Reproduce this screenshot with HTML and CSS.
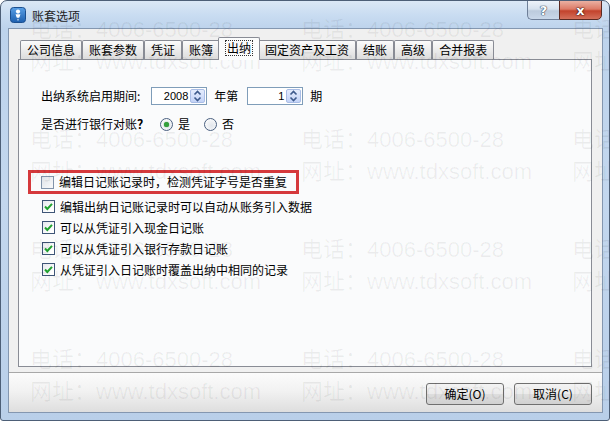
FILE: index.html
```html
<!DOCTYPE html>
<html lang="zh-CN">
<head>
<meta charset="utf-8">
<title>账套选项</title>
<link rel="stylesheet" href="styles.css">
</head>
<body>
<div class="window">
  <div class="titlebar">
    <div class="title-left">
      <svg class="app-icon" width="16" height="16" viewBox="0 0 16 16">
        <defs>
          <linearGradient id="ig" x1="0" y1="0" x2="0" y2="1">
            <stop offset="0" stop-color="#5aa0e6"/>
            <stop offset="1" stop-color="#1d5fae"/>
          </linearGradient>
        </defs>
        <rect x="0.5" y="0.5" width="15" height="15" rx="3" fill="url(#ig)" stroke="#1b4f8f"/>
        <circle cx="8" cy="4.6" r="2.1" fill="#fff"/>
        <path d="M5.6 7.2h4.8l-1 3.2h-0.9v3.2h-1v-3.2h-0.9z" fill="#fff"/>
        <path d="M7.1 11.5h1.8" stroke="#1d5fae" stroke-width="0.8"/>
      </svg>
      <span class="title-text">账套选项</span>
    </div>
    <div class="caption-btns">
      <div class="cap-help">?</div>
      <div class="cap-close">x</div>
    </div>
  </div>

  <div class="client">
    <div class="tabstrip">
      <div class="tab">公司信息</div>
      <div class="tab">账套参数</div>
      <div class="tab">凭证</div>
      <div class="tab">账簿</div>
      <div class="tab active"><span class="focus">出纳</span></div>
      <div class="tab">固定资产及工资</div>
      <div class="tab">结账</div>
      <div class="tab">高级</div>
      <div class="tab">合并报表</div>
    </div>

    <div class="panel">
      <div class="row period-row">
        <span class="label">出纳系统启用期间:</span>
        <div class="spin">
          <span class="spin-val">2008</span>
          <div class="spin-btn">
            <svg width="9" height="12" viewBox="0 0 9 12"><path d="M1.5 4.5L4.5 1.5L7.5 4.5M1.5 7.5L4.5 10.5L7.5 7.5" fill="none" stroke="#3d5a8c" stroke-width="1.6"/></svg>
          </div>
        </div>
        <span class="label after-spin">年第</span>
        <div class="spin spin2">
          <span class="spin-val">1</span>
          <div class="spin-btn">
            <svg width="9" height="12" viewBox="0 0 9 12"><path d="M1.5 4.5L4.5 1.5L7.5 4.5M1.5 7.5L4.5 10.5L7.5 7.5" fill="none" stroke="#3d5a8c" stroke-width="1.6"/></svg>
          </div>
        </div>
        <span class="label after-spin">期</span>
      </div>

      <div class="row radio-row">
        <span class="label">是否进行银行对账<b class="qm">？</b></span>
        <span class="radio checked"></span><span class="label rlabel">是</span>
        <span class="radio second"></span><span class="label rlabel">否</span>
      </div>

      <div class="highlight">
        <span class="check"></span><span class="label">编辑日记账记录时，检测凭证字号是否重复</span>
      </div>
      <div class="check-row first">
        <span class="check checked"><svg width="11" height="11" viewBox="0 0 11 11"><path d="M2 5.5L4.3 8L9 2.8" fill="none" stroke="#21a330" stroke-width="2"/></svg></span><span class="label">编辑出纳日记账记录时可以自动从账务引入数据</span>
      </div>
      <div class="check-row">
        <span class="check checked"><svg width="11" height="11" viewBox="0 0 11 11"><path d="M2 5.5L4.3 8L9 2.8" fill="none" stroke="#21a330" stroke-width="2"/></svg></span><span class="label">可以从凭证引入现金日记账</span>
      </div>
      <div class="check-row">
        <span class="check checked"><svg width="11" height="11" viewBox="0 0 11 11"><path d="M2 5.5L4.3 8L9 2.8" fill="none" stroke="#21a330" stroke-width="2"/></svg></span><span class="label">可以从凭证引入银行存款日记账</span>
      </div>
      <div class="check-row">
        <span class="check checked"><svg width="11" height="11" viewBox="0 0 11 11"><path d="M2 5.5L4.3 8L9 2.8" fill="none" stroke="#21a330" stroke-width="2"/></svg></span><span class="label">从凭证引入日记账时覆盖出纳中相同的记录</span>
      </div>
    </div>

    <div class="footer">
      <button class="btn">确定(O)</button>
      <button class="btn">取消(C)</button>
    </div>
  </div>

  <div class="watermark">
    <div class="wm"><div>电话：4006-6500-28</div><div>网址：www.tdxsoft.com</div></div>
    <div class="wm"><div>电话：4006-6500-28</div><div>网址：www.tdxsoft.com</div></div>
    <div class="wm"><div>电话：4006-6500-28</div><div>网址：www.tdxsoft.com</div></div>
    <div class="wm"><div>电话：4006-6500-28</div><div>网址：www.tdxsoft.com</div></div>
    <div class="wm"><div>电话：4006-6500-28</div><div>网址：www.tdxsoft.com</div></div>
    <div class="wm"><div>电话：4006-6500-28</div><div>网址：www.tdxsoft.com</div></div>
    <div class="wm"><div>电话：4006-6500-28</div><div>网址：www.tdxsoft.com</div></div>
    <div class="wm"><div>电话：4006-6500-28</div><div>网址：www.tdxsoft.com</div></div>
    <div class="wm"><div>电话：4006-6500-28</div><div>网址：www.tdxsoft.com</div></div>
    <div class="wm"><div>电话：4006-6500-28</div><div>网址：www.tdxsoft.com</div></div>
    <div class="wm"><div>电话：4006-6500-28</div><div>网址：www.tdxsoft.com</div></div>
    <div class="wm"><div>电话：4006-6500-28</div><div>网址：www.tdxsoft.com</div></div>
  </div>
</div>
</body>
</html>
```

FILE: styles.css
```css
* { box-sizing: border-box; }

html, body {
  margin: 0;
  padding: 0;
  background: #ffffff;
}

body {
  font-family: "Noto Sans CJK SC", "Liberation Sans", sans-serif;
  font-size: 12px;
  color: #000;
}

.window {
  position: relative;
  width: 610px;
  height: 421px;
  overflow: hidden;
  border: 1px solid #4d5f77;
  border-radius: 7px 7px 3px 3px;
  background: linear-gradient(180deg, #dbe8f6 0px, #c9dcf1 14px, #bdd3ec 28px, #c3d7ee 200px, #b9cfe9 421px);
  padding: 0 6px 7px 7px;
  display: flex;
  flex-direction: column;
}

/* ---------- title bar ---------- */
.titlebar {
  height: 27px;
  display: flex;
  justify-content: space-between;
  align-items: center;
  padding-left: 2px;
}

.title-left {
  display: flex;
  align-items: center;
  gap: 6px;
  padding-top: 1px;
}

.app-icon { display: block; }

.title-text {
  font-size: 12px;
  color: #1e1e1e;
}

.caption-btns {
  align-self: flex-start;
  display: flex;
  margin-top: -1px;
  margin-right: 1px;
}

.cap-help, .cap-close {
  height: 20px;
  display: flex;
  align-items: center;
  justify-content: center;
  font-family: "DejaVu Sans", sans-serif;
  font-weight: bold;
  color: #fff;
}

.cap-help {
  width: 32px;
  border: 1px solid #6e7f98;
  border-right: none;
  border-radius: 0 0 0 5px;
  background: linear-gradient(180deg, #eef3fa 0%, #d6e1ee 45%, #bccbdd 55%, #c9d8ea 100%);
  font-size: 13px;
  text-shadow: 0 0 1px #33445c, 0 0 1px #33445c, 0 0 1px #33445c;
}

.cap-close {
  width: 43px;
  border: 1px solid #5b2a22;
  border-radius: 0 0 5px 0;
  background: linear-gradient(180deg, #eab0a2 0%, #dc7b67 45%, #c3432c 55%, #d4705b 100%);
  font-size: 13px;
  text-shadow: 0 0 1px #3a1410, 0 0 1px #3a1410, 0 0 2px #3a1410;
}

/* ---------- client ---------- */
.client {
  flex: 1;
  border: 1px solid #8497b0;
  background: #f0f0f0;
  display: flex;
  flex-direction: column;
  padding-top: 8px;
}

.tabstrip {
  height: 22px;
  display: flex;
  align-items: flex-end;
  padding-left: 11px;
}

.tab {
  height: 19px;
  padding: 0 6px;
  border: 1px solid #898c95;
  border-bottom: none;
  border-radius: 2px 2px 0 0;
  background: linear-gradient(180deg, #fbfbfb 0%, #ececec 50%, #dcdcdc 100%);
  display: flex;
  align-items: center;
  white-space: nowrap;
  line-height: 14px;
  color: #000;
}

.tab.active {
  height: 23px;
  margin: 0 -2px -1px -2px;
  padding: 0 6px 2px;
  background: #fbfcfc;
  position: relative;
  z-index: 1;
}

.focus {
  border: 1px dotted #333;
  padding: 0 1px;
  line-height: 14px;
}

.panel {
  height: 308px;
  margin: 0 10px 0 9px;
  border: 1px solid #898c95;
  background: #fafbfc;
  padding: 27px 0 0 22px;
}

.row {
  display: flex;
  align-items: center;
  height: 18px;
}

.label {
  white-space: nowrap;
  line-height: 16px;
}

.qm { font-weight: bold; }

.spin {
  width: 56px;
  height: 18px;
  margin-left: 11px;
  border: 1px solid #7f9db9;
  background: #fff;
  display: flex;
  align-items: center;
  justify-content: flex-end;
  padding-right: 1px;
}

.spin-val {
  font-family: "Liberation Sans", sans-serif;
  font-size: 11px;
  margin-right: 2px;
}

.spin-btn {
  width: 15px;
  height: 14px;
  border: 1px solid #a9bde6;
  border-radius: 2px;
  background: linear-gradient(180deg, #e4ecfd 0%, #c3d3f7 100%);
  display: flex;
  align-items: center;
  justify-content: center;
}

.spin-btn svg { display: block; }

.after-spin { margin-left: 7px; }
.spin2 { margin-left: 9px; }

.radio-row {
  margin-top: 10px;
}

.radio {
  width: 13px;
  height: 13px;
  border: 1px solid #4a6080;
  border-radius: 50%;
  background: radial-gradient(circle at 60% 60%, #e2e6ec 0%, #f8f9fa 70%);
  display: flex;
  align-items: center;
  justify-content: center;
  margin-left: 11px;
}

.radio.checked::after {
  content: "";
  width: 5px;
  height: 5px;
  border-radius: 50%;
  background: #34a03c;
  box-shadow: 0 0 1px #2c8a34;
}

.radio.second { margin-left: 14px; }
.rlabel { margin-left: 5px; }

.highlight {
  width: 271px;
  height: 24px;
  margin: 37px 0 0 -13px;
  border: 3px solid #d5393c;
  display: flex;
  align-items: center;
  padding-left: 10px;
}

.check {
  width: 13px;
  height: 13px;
  border: 1px solid #8193ab;
  background: linear-gradient(135deg, #dde2e8 0%, #f5f6f8 80%);
  display: flex;
  align-items: center;
  justify-content: center;
  margin-right: 5px;
  flex-shrink: 0;
}

.check.checked { border-color: #3e5577; background: linear-gradient(135deg, #e6e9ee 0%, #ffffff 80%); }
.check svg { display: block; }

.check-row {
  height: 21px;
  display: flex;
  align-items: center;
  padding-left: 1px;
}

.check-row.first { margin-top: 2px; }

.footer {
  margin-top: 5px;
  flex: 1;
  border-top: 1px solid #a8a8a8;
  background: linear-gradient(180deg, #fbfbfb 0%, #f2f2f2 45%, #dedede 100%);
  display: flex;
  justify-content: flex-end;
  align-items: flex-start;
  gap: 10px;
  padding: 10px 10px 0 0;
}

.btn {
  width: 78px;
  height: 22px;
  border: 1px solid #707070;
  border-radius: 3px;
  background: linear-gradient(180deg, #f3f3f3 0%, #ebebeb 48%, #dddddd 52%, #d1d1d1 100%);
  font-family: "Noto Sans CJK SC", sans-serif;
  font-size: 12px;
  color: #000;
  padding: 0;
  line-height: 18px;
}

/* ---------- watermark overlay ---------- */
.watermark {
  position: absolute;
  top: 13px;
  left: 29px;
  display: grid;
  grid-template-columns: repeat(3, 271px);
  grid-auto-rows: 110px;
  pointer-events: none;
  font-family: "Liberation Sans", "Noto Sans CJK SC", sans-serif;
  font-size: 22px;
  font-weight: normal;
  color: rgba(0, 0, 0, 0.06);
  line-height: 32px;
  white-space: nowrap;
}
```
